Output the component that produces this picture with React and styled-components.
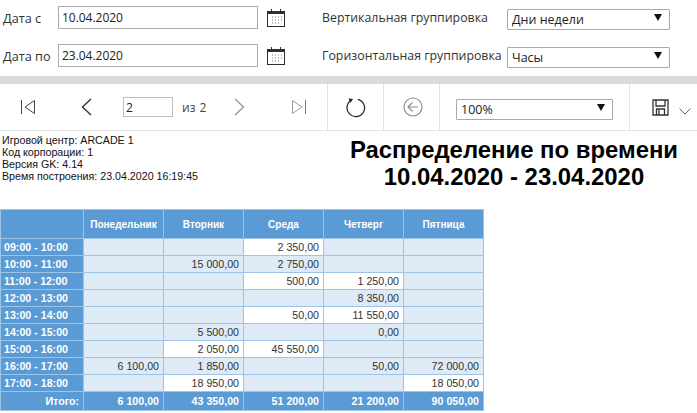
import styled, { createGlobalStyle } from 'styled-components';

const GlobalStyle = createGlobalStyle`
   html, body {
      margin: 0;
      padding: 0;
      background: #fff;
   }
   body {
      font-family: "Open Sans", "Noto Sans", sans-serif;
      color: #222;
   }
`;

const Page = styled.div`
   width: 697px;
   height: 413px;
   overflow: hidden;
`;

const FilterForm = styled.form`
   display: grid;
   grid-template-columns: 58px 200px 64px 185px 163px;
   grid-template-rows: 23px 23px;
   row-gap: 15px;
   padding-top: 6px;
   height: 76px;
   box-sizing: border-box;
   align-items: center;
`;

const DateLabel = styled.label`
   font-size: 12.7px;
   padding-left: 3px;
   color: #333;
`;

const GroupLabel = styled.label`
   font-size: 12.35px;
   color: #333;
   white-space: nowrap;
`;

const DateCell = styled.div`
   display: flex;
   align-items: center;
`;

const DateInput = styled.input`
   width: 200px;
   height: 23px;
   box-sizing: border-box;
   border: 1px solid #a9a9a9;
   padding: 0 3px;
   font: 12px "Open Sans", sans-serif;
   letter-spacing: -0.03px;
   color: #222;
   outline: none;
`;

const CalendarCell = styled.div`
   display: flex;
   align-items: center;
   padding-left: 8px;
`;

const SelectWrap = styled.div`
   position: relative;
   width: ${(p) => p.$width}px;
   height: 21px;
   &::after {
      content: '';
      position: absolute;
      top: 7px;
      right: 8px;
      border-left: 4px solid transparent;
      border-right: 4px solid transparent;
      border-top: 7px solid #111;
   }
`;

const Select = styled.select`
   appearance: none;
   width: 100%;
   height: 100%;
   box-sizing: border-box;
   border: 1px solid #a9a9a9;
   border-radius: 1px;
   background: #fff;
   padding: 0 4px;
   font: 12.5px "Open Sans", sans-serif;
   color: #222;
   outline: none;
`;

const Band = styled.div`
   height: 8px;
   background: #dadada;
`;

const Toolbar = styled.div`
   display: flex;
   height: 47px;
   box-sizing: border-box;
   border-bottom: 1px solid #e2e2e2;
`;

const ToolSection = styled.div`
   display: flex;
   align-items: center;
   width: ${(p) => p.$width}px;
   box-sizing: border-box;
   padding-left: ${(p) => p.$pad || 0}px;
   border-right: ${(p) => (p.$last ? 'none' : '1px solid #e2e2e2')};
`;

const IconSlot = styled.span`
   display: flex;
   width: ${(p) => p.$width}px;
   flex: none;
`;

const CaretSlot = styled.span`
   display: flex;
   padding-top: 8px;
`;

const PageInput = styled.input`
   width: 50px;
   height: 20px;
   box-sizing: border-box;
   border: 1px solid #bdbdbd;
   padding: 0 2px;
   font: 12px "Open Sans", sans-serif;
   color: #222;
   outline: none;
`;

const PageCount = styled.span`
   font-size: 12px;
   color: #444;
   width: 61px;
   padding-left: 9px;
   box-sizing: border-box;
   flex: none;
   word-spacing: 1px;
`;

const Report = styled.div`
   display: flex;
   height: 78px;
   box-sizing: border-box;
   font-family: "Liberation Sans", Arial, sans-serif;
`;

const ReportInfo = styled.div`
   width: 332px;
   flex: none;
   padding: 3px 0 0 2px;
   box-sizing: border-box;
   font-size: 10.67px;
   line-height: 12px;
   color: #111;
`;

const ReportTitle = styled.h1`
   width: 364px;
   margin: 0;
   padding-top: 5px;
   text-align: center;
   font-size: 23.9px;
   line-height: 27px;
   font-weight: 700;
   color: #000;
`;

const Table = styled.table`
   border-collapse: collapse;
   table-layout: fixed;
   width: 484px;
   font-family: "Liberation Sans", Arial, sans-serif;
   font-size: 10.67px;
`;

const HeadCell = styled.th`
   height: 29px;
   width: ${(p) => (p.$first ? 83 : 80)}px;
   box-sizing: border-box;
   padding: 0;
   background: #5b9bd5;
   border: 1px solid #9dc3e6;
   color: #fff;
   font-size: 10px;
   font-weight: 700;
   text-align: center;
`;

const RowHead = styled.th`
   height: 17px;
   box-sizing: border-box;
   padding: 0 0 0 3px;
   background: #5b9bd5;
   border: 1px solid #9dc3e6;
   color: #fff;
   font-size: 10.67px;
   font-weight: 700;
   text-align: left;
`;

const Cell = styled.td`
   height: 17px;
   box-sizing: border-box;
   padding: 0 4px 0 0;
   background: ${(p) => (p.$white ? '#fff' : '#deeaf6')};
   border: 1px solid #9dc3e6;
   color: #333;
   text-align: right;
`;

const TotalLabel = styled(RowHead)`
   height: 19px;
   padding: 0 4px 0 0;
   text-align: right;
   font-size: 10.67px;
`;

const TotalCell = styled(TotalLabel)``;

const CalendarIcon = () => (
   <svg width="20" height="20" viewBox="0 0 20 20" fill="none">
      <rect x="1.5" y="3.5" width="17" height="15" stroke="#2e2e2e" fill="#fff" />
      <rect x="1" y="3" width="18" height="3" fill="#2e2e2e" />
      <path d="M5.5 1v4M14.5 1v4" stroke="#2e2e2e" />
      <path d="M6 9h1M9 9h1M12 9h1M15 9h1M6 12h1M9 12h1M12 12h1M15 12h1M6 15h1M9 15h1M12 15h1" stroke="#777" />
   </svg>
);

const FirstIcon = () => (
   <svg width="16" height="16" viewBox="0 0 16 16" fill="none" stroke="#444">
      <path d="M1.5 1v14" />
      <path d="M14.5 1.5L5 8l9.5 6.5z" />
   </svg>
);

const LastIcon = () => (
   <svg width="16" height="16" viewBox="0 0 16 16" fill="none" stroke="#9a9a9a">
      <path d="M14.5 1v14" stroke="#777" />
      <path d="M1.5 1.5L11 8l-9.5 6.5z" />
   </svg>
);

const ChevronIcon = ({ dir, color }) => (
   <svg width="11" height="18" viewBox="0 0 11 18" fill="none" stroke={color} strokeWidth="1.4">
      <path d={dir === 'left' ? 'M10 1L1.500 9l8.500 8' : 'M1 1l8.500 8L1 17'} />
   </svg>
);

const RefreshIcon = () => (
   <svg width="21" height="21" viewBox="0 0 22 22" fill="none" stroke="#222" strokeWidth="1.3">
      <path d="M7 3.200A9.200 9.200 0 1 0 13.500 2.400" />
      <path d="M3.600 1.600L8.400 2.200 5.800 6z" fill="#222" stroke="none" />
   </svg>
);

const BackIcon = () => (
   <svg width="20" height="20" viewBox="0 0 20 20" fill="none" stroke="#8f8f8f" strokeWidth="1.2">
      <circle cx="10" cy="10" r="9" />
      <path d="M15 10H5M9.500 5.500L5 10l4.500 4.500" />
   </svg>
);

const SaveIcon = () => (
   <svg width="17" height="17" viewBox="0 0 17 17" fill="none" stroke="#333" strokeWidth="1.3">
      <path d="M1 1h15v15H1z" />
      <path d="M4 1v6h9V1" />
      <path d="M4.500 16v-6h8v6" />
      <path d="M7 11v5" />
   </svg>
);

const CaretIcon = () => (
   <svg width="12" height="7" viewBox="0 0 12 7" fill="none" stroke="#666">
      <path d="M0.500 0.500L6 6l5.500-5.500" />
   </svg>
);

const days = ['Понедельник', 'Вторник', 'Среда', 'Четверг', 'Пятница'];

const rows = [
   ['09:00 - 10:00', [null, null, '2 350,00', null, null], [2]],
   ['10:00 - 11:00', [null, '15 000,00', '2 750,00', null, null], []],
   ['11:00 - 12:00', [null, null, '500,00', '1 250,00', null], [2, 3]],
   ['12:00 - 13:00', [null, null, null, '8 350,00', null], []],
   ['13:00 - 14:00', [null, null, '50,00', '11 550,00', null], [2, 3]],
   ['14:00 - 15:00', [null, '5 500,00', null, '0,00', null], []],
   ['15:00 - 16:00', [null, '2 050,00', '45 550,00', null, null], [1, 2]],
   ['16:00 - 17:00', ['6 100,00', '1 850,00', null, '50,00', '72 000,00'], []],
   ['17:00 - 18:00', [null, '18 950,00', null, null, '18 050,00'], [1, 4]],
];

const totals = ['6 100,00', '43 350,00', '51 200,00', '21 200,00', '90 050,00'];

const App = () => {
   return (
      <Page>
         <GlobalStyle />
         <FilterForm>
            <DateLabel>Дата с</DateLabel>
            <DateCell>
               <DateInput defaultValue="10.04.2020" />
            </DateCell>
            <CalendarCell>
               <CalendarIcon />
            </CalendarCell>
            <GroupLabel>Вертикальная группировка</GroupLabel>
            <SelectWrap $width={163}>
               <Select defaultValue="days">
                  <option value="days">Дни недели</option>
               </Select>
            </SelectWrap>

            <DateLabel>Дата по</DateLabel>
            <DateCell>
               <DateInput defaultValue="23.04.2020" />
            </DateCell>
            <CalendarCell>
               <CalendarIcon />
            </CalendarCell>
            <GroupLabel>Горизонтальная группировка</GroupLabel>
            <SelectWrap $width={163}>
               <Select defaultValue="hours">
                  <option value="hours">Часы</option>
               </Select>
            </SelectWrap>
         </FilterForm>

         <Band />

         <Toolbar>
            <ToolSection $width={328} $pad={20}>
               <IconSlot $width={61}>
                  <FirstIcon />
               </IconSlot>
               <IconSlot $width={42}>
                  <ChevronIcon dir="left" color="#333" />
               </IconSlot>
               <PageInput defaultValue="2" />
               <PageCount>из 2</PageCount>
               <IconSlot $width={57}>
                  <ChevronIcon dir="right" color="#999" />
               </IconSlot>
               <LastIcon />
            </ToolSection>
            <ToolSection $width={56} $pad={17}>
               <RefreshIcon />
            </ToolSection>
            <ToolSection $width={56} $pad={19}>
               <BackIcon />
            </ToolSection>
            <ToolSection $width={190} $pad={16}>
               <SelectWrap $width={157}>
                  <Select defaultValue="100">
                     <option value="100">100%</option>
                  </Select>
               </SelectWrap>
            </ToolSection>
            <ToolSection $width={67} $pad={22} $last>
               <IconSlot $width={27}>
                  <SaveIcon />
               </IconSlot>
               <CaretSlot>
                  <CaretIcon />
               </CaretSlot>
            </ToolSection>
         </Toolbar>

         <Report>
            <ReportInfo>
               <div>Игровой центр: ARCADE 1</div>
               <div>Код корпорации: 1</div>
               <div>Версия GK: 4.14</div>
               <div>Время построения: 23.04.2020 16:19:45</div>
            </ReportInfo>
            <ReportTitle>
               Распределение по времени
               <br />
               10.04.2020 - 23.04.2020
            </ReportTitle>
         </Report>

         <Table>
            <thead>
               <tr>
                  <HeadCell $first />
                  {days.map((day) => (
                     <HeadCell key={day}>{day}</HeadCell>
                  ))}
               </tr>
            </thead>
            <tbody>
               {rows.map(([time, values, whites]) => (
                  <tr key={time}>
                     <RowHead>{time}</RowHead>
                     {values.map((value, i) => (
                        <Cell key={i} $white={whites.includes(i)}>
                           {value}
                        </Cell>
                     ))}
                  </tr>
               ))}
               <tr>
                  <TotalLabel>Итого:</TotalLabel>
                  {totals.map((total) => (
                     <TotalCell key={total}>{total}</TotalCell>
                  ))}
               </tr>
            </tbody>
         </Table>
      </Page>
   );
};

export default App;
